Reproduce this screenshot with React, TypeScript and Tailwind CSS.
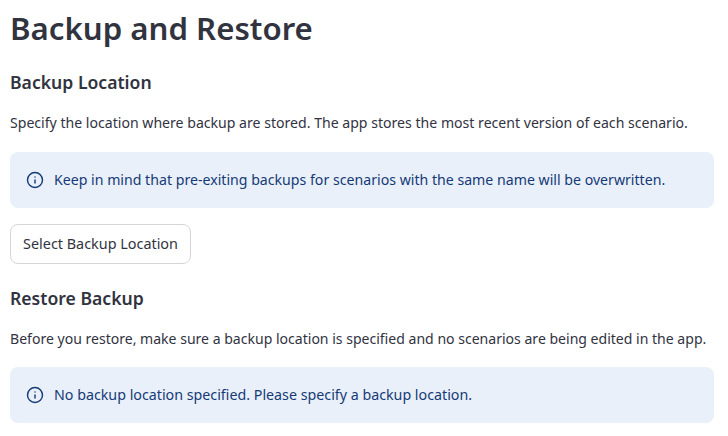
import { Info } from "lucide-react";

const Notice = ({ text, size }: { text: string; size: string }) => (
  <div className={`flex items-center gap-[10px] bg-[#e9f0fa] rounded-lg h-14 px-4 text-[#153a75] ${size}`}>
    <Info className="w-[18px] h-[18px]" strokeWidth={1.9} />
    <span>{text}</span>
  </div>
);

export default function App() {
  return (
    <div className="w-[728px] h-[436px] overflow-hidden bg-white text-[#31333f] px-[10px] font-['Noto_Sans',sans-serif]">
      <h1 className="text-[31.2px] leading-[40px] font-semibold pt-2">Backup and Restore</h1>
      <h2 className="text-[17.6px] leading-6 font-semibold mt-[22px]">Backup Location</h2>
      <p className="text-[14.1px] leading-5 mt-[19px]">
        Specify the location where backup are stored. The app stores the most recent version of each scenario.
      </p>
      <div className="mt-[19px] w-[704px]">
        <Notice
          size="text-[14.15px]"
          text="Keep in mind that pre-exiting backups for scenarios with the same name will be overwritten."
        />
      </div>
      <button className="block mt-4 h-10 w-[181px] border border-[#d5d6da] rounded-lg text-[14.4px]">
        Select Backup Location
      </button>
      <h2 className="text-[17.6px] leading-6 font-semibold mt-[22px]">Restore Backup</h2>
      <p className="text-[14.05px] leading-5 mt-[19px]">
        Before you restore, make sure a backup location is specified and no scenarios are being edited in the app.
      </p>
      <div className="mt-[18px] w-[704px]">
        <Notice
          size="text-[14.25px]"
          text="No backup location specified. Please specify a backup location."
        />
      </div>
    </div>
  );
}
